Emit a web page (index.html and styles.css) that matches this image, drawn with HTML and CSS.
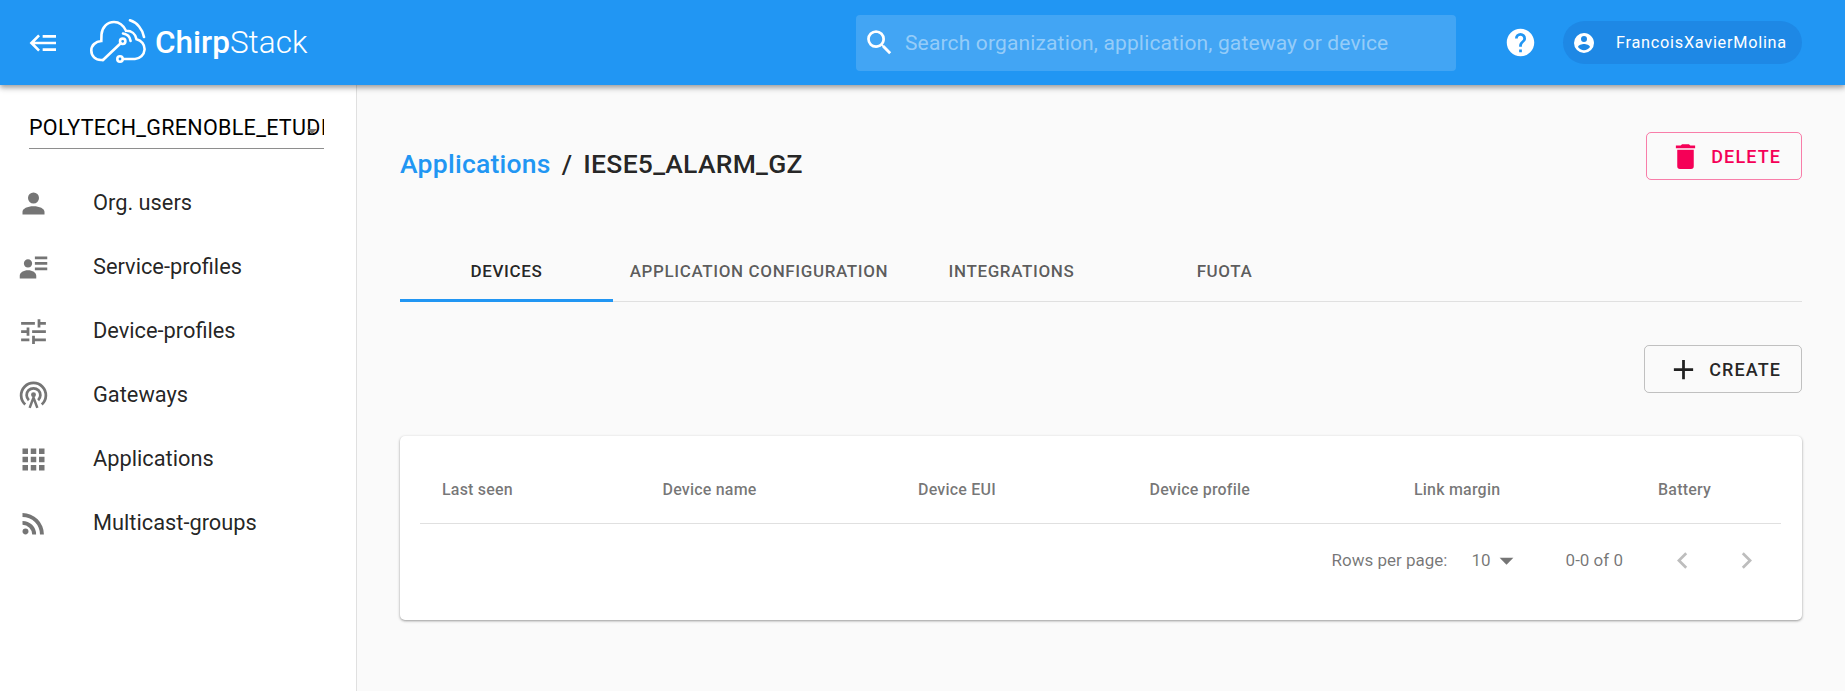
FILE: index.html
```html
<!DOCTYPE html>
<html lang="en">
<head>
<meta charset="utf-8">
<title>ChirpStack</title>
<link rel="stylesheet" href="styles.css">
</head>
<body>
<div class="app">
  <header class="topbar">
    <svg class="icon menu-icon" viewBox="0 0 24 24"><path d="M5,13L9,17L7.6,18.42L1.18,12L7.6,5.58L9,7L5,11H21V13H5M21,6V8H11V6H21M21,16V18H11V16H21Z"/></svg>
    <div class="logo">
      <svg class="logo-mark" viewBox="0 0 56 44" fill="none" stroke="#fff" stroke-width="2.6" stroke-linecap="round">
        <path d="M33 40H45A10 10 0 0 0 46.5 20.2C45.5 15 41.5 11.6 36 11.8C33.5 6.5 29.5 3 24 3C17 3 12 8.5 11.5 15.5L11.3 22C5.5 22.5 1.3 26.5 1.3 31.5C1.3 37 5.5 41 11 41H13"/>
        <path d="M13 41L30.7 24.3"/>
        <circle cx="32.7" cy="22.3" r="2.7"/>
        <circle cx="30" cy="40" r="2.7"/>
        <path d="M33 14.5C37 15 40 18 40.6 22"/>
        <path d="M40 1.3C47 3.5 52.5 10 54 18"/>
      </svg>
      <span class="logo-text"><b class="logo-strong">Chirp</b>Stack</span>
    </div>
    <div class="search">
      <svg class="icon search-icon" viewBox="0 0 24 24"><path d="M9.5,3A6.5,6.5 0 0,1 16,9.5C16,11.11 15.41,12.59 14.44,13.73L14.71,14H15.5L20.5,19L19,20.5L14,15.5V14.71L13.73,14.44C12.59,15.41 11.11,16 9.5,16A6.5,6.5 0 0,1 3,9.5A6.5,6.5 0 0,1 9.5,3M9.5,5C7,5 5,7 5,9.5C5,12 7,14 9.5,14C12,14 14,12 14,9.5C14,7 12,5 9.5,5Z"/></svg>
      <span class="search-text">Search organization, application, gateway or device</span>
    </div>
    <svg class="icon help-icon" viewBox="0 0 24 24"><path d="M15.07,11.25L14.17,12.17C13.45,12.89 13,13.5 13,15H11V14.5C11,13.39 11.45,12.39 12.17,11.67L13.41,10.41C13.78,10.05 14,9.55 14,9C14,7.89 13.1,7 12,7A2,2 0 0,0 10,9H8A4,4 0 0,1 12,5A4,4 0 0,1 16,9C16,9.88 15.64,10.67 15.07,11.25M13,19H11V17H13M12,2A10,10 0 0,0 2,12A10,10 0 0,0 12,22A10,10 0 0,0 22,12C22,6.47 17.5,2 12,2Z"/></svg>
    <div class="user-chip">
      <svg class="icon chip-icon" viewBox="0 0 24 24"><path d="M12,19.2C9.5,19.2 7.29,17.92 6,16C6.03,14 10,12.9 12,12.9C14,12.9 17.97,14 18,16C16.71,17.92 14.5,19.2 12,19.2M12,5A3,3 0 0,1 15,8A3,3 0 0,1 12,11A3,3 0 0,1 9,8A3,3 0 0,1 12,5M12,2A10,10 0 0,0 2,12A10,10 0 0,0 12,22A10,10 0 0,0 22,12C22,6.47 17.5,2 12,2Z"/></svg>
      <span class="chip-text">FrancoisXavierMolina</span>
    </div>
  </header>

  <div class="body-row">
    <aside class="sidebar">
      <div class="org-select">
        <span class="org-name">POLYTECH_GRENOBLE_ETUDIANTS</span>
        <svg class="icon org-arrow" viewBox="0 0 24 24"><path d="M7,10L12,15L17,10H7Z"/></svg>
      </div>
      <nav class="nav">
        <div class="nav-item"><svg class="icon nav-icon" viewBox="0 0 24 24"><path d="M12,4A4,4 0 0,1 16,8A4,4 0 0,1 12,12A4,4 0 0,1 8,8A4,4 0 0,1 12,4M12,14C16.42,14 20,15.79 20,18V20H4V18C4,15.79 7.58,14 12,14Z"/></svg><span class="nav-label">Org. users</span></div>
        <div class="nav-item"><svg class="icon nav-icon" viewBox="0 0 24 24"><path d="M11,9C11,10.66 9.66,12 8,12C6.34,12 5,10.66 5,9C5,7.34 6.34,6 8,6C9.66,6 11,7.34 11,9M14,20H2V18C2,15.79 4.69,14 8,14C11.31,14 14,15.79 14,18M22,12V14H13V12M22,8V10H13V8M22,4V6H13V4Z"/></svg><span class="nav-label">Service-profiles</span></div>
        <div class="nav-item"><svg class="icon nav-icon" viewBox="0 0 24 24"><path d="M3,17V19H9V17H3M3,5V7H13V5H3M13,21V19H21V17H13V15H11V21H13M7,9V11H3V13H7V15H9V9H7M21,13V11H11V13H21M15,9H17V7H21V5H17V3H15V9Z"/></svg><span class="nav-label">Device-profiles</span></div>
        <div class="nav-item"><svg class="icon nav-icon" viewBox="0 0 24 24"><path d="M6 18.6A9 9 0 1 1 18 18.6" fill="none" stroke="#757575" stroke-width="2"/><path d="M8.6 15.4A5 5 0 1 1 15.4 15.4" fill="none" stroke="#757575" stroke-width="2"/><circle cx="12" cy="11.5" r="1.8"/><path d="M9.2 21L12 13.5L14.8 21" fill="none" stroke="#757575" stroke-width="1.8"/></svg><span class="nav-label">Gateways</span></div>
        <div class="nav-item"><svg class="icon nav-icon" viewBox="0 0 24 24"><path d="M16,20H20V16H16M16,14H20V10H16M10,8H14V4H10M16,8H20V4H16M10,14H14V10H10M4,14H8V10H4M4,20H8V16H4M10,20H14V16H10M4,8H8V4H4V8Z"/></svg><span class="nav-label">Applications</span></div>
        <div class="nav-item"><svg class="icon nav-icon" viewBox="0 0 24 24"><path d="M6.18,15.64A2.18,2.18 0 0,1 8.36,17.82C8.36,19 7.38,20 6.18,20C5,20 4,19 4,17.82A2.18,2.18 0 0,1 6.18,15.64M4,4.44A15.56,15.56 0 0,1 19.56,20H16.73A12.73,12.73 0 0,0 4,7.27V4.44M4,10.1A9.9,9.9 0 0,1 13.9,20H11.07A7.07,7.07 0 0,0 4,12.93V10.1Z"/></svg><span class="nav-label">Multicast-groups</span></div>
      </nav>
    </aside>

    <main class="main">
      <div class="title-row">
        <div class="crumbs"><a class="crumb-link">Applications</a><span class="crumb-sep">/</span><span class="crumb-current">IESE5_ALARM_GZ</span></div>
        <button class="btn btn-danger"><svg class="icon btn-icon" viewBox="0 0 24 24"><path d="M19,4H15.5L14.5,3H9.5L8.5,4H5V6H19M6,19A2,2 0 0,0 8,21H16A2,2 0 0,0 18,19V7H6V19Z"/></svg>DELETE</button>
      </div>

      <div class="tabs">
        <div class="tab tab-active">DEVICES</div>
        <div class="tab tab-wide">APPLICATION CONFIGURATION</div>
        <div class="tab">INTEGRATIONS</div>
        <div class="tab">FUOTA</div>
      </div>

      <div class="action-row">
        <button class="btn btn-default"><svg class="icon btn-icon" viewBox="0 0 24 24"><path d="M19,13H13V19H11V13H5V11H11V5H13V11H19V13Z"/></svg>CREATE</button>
      </div>

      <section class="card">
        <div class="table-head">
          <span>Last seen</span><span>Device name</span><span>Device EUI</span><span>Device profile</span><span>Link margin</span><span>Battery</span>
        </div>
        <div class="pager">
          <span class="pager-label">Rows per page:</span>
          <span class="pager-size">10</span>
          <svg class="icon pager-arrow" viewBox="0 0 24 24"><path d="M7,10L12,15L17,10H7Z"/></svg>
          <span class="pager-count">0-0 of 0</span>
          <svg class="icon pager-nav pager-prev" viewBox="0 0 24 24"><path d="M15.41,16.58L10.83,12L15.41,7.41L14,6L8,12L14,18L15.41,16.58Z"/></svg>
          <svg class="icon pager-nav pager-next" viewBox="0 0 24 24"><path d="M8.59,16.58L13.17,12L8.59,7.41L10,6L16,12L10,18L8.59,16.58Z"/></svg>
        </div>
      </section>
    </main>
  </div>
</div>
</body>
</html>
```

FILE: styles.css
```css
* { box-sizing: border-box; }
html, body { margin: 0; padding: 0; height: 100%; }
body {
  font-family: Roboto, "Liberation Sans", sans-serif;
  background: #fafafa;
  color: rgba(0, 0, 0, 0.87);
  overflow: hidden;
}
.app { display: flex; flex-direction: column; height: 691px; }
.icon { display: block; fill: currentColor; flex: none; }

/* top bar */
.topbar {
  position: relative;
  z-index: 2;
  flex: none;
  height: 85px;
  display: flex;
  align-items: center;
  background: #2196f3;
  color: #fff;
  box-shadow: 0 2px 5px rgba(0, 0, 0, 0.3), 0 4px 6px rgba(0, 0, 0, 0.12);
}
.menu-icon { width: 32px; height: 32px; margin-left: 28px; }
.logo { display: flex; align-items: center; margin-left: 30px; width: 766px; }
.logo-mark { width: 56px; height: 44px; flex: none; margin-bottom: 4px; }
.logo-text {
  margin-left: 9px;
  font-size: 31.5px;
  font-weight: 300;
  letter-spacing: 0;
}
.logo-strong { font-weight: 500; }
.search {
  width: 600px;
  height: 56px;
  display: flex;
  align-items: center;
  border-radius: 4px;
  background: rgba(255, 255, 255, 0.15);
}
.search-icon { width: 33px; height: 33px; margin-left: 7px; }
.search-text {
  margin-left: 9px;
  font-size: 21px;
  letter-spacing: 0.15px;
  color: rgba(255, 255, 255, 0.45);
}
.help-icon { width: 33px; height: 33px; margin-left: 48px; }
.user-chip {
  margin-left: 26px;
  width: 239px;
  height: 43px;
  display: flex;
  align-items: center;
  border-radius: 22px;
  background: #1e88e5;
}
.chip-icon { width: 24px; height: 24px; margin-left: 9px; }
.chip-text { margin-left: 20px; font-size: 16.25px; letter-spacing: 0.75px; }

/* sidebar */
.body-row { flex: 1; display: flex; min-height: 0; }
.sidebar {
  flex: none;
  width: 357px;
  background: #fff;
  border-right: 1px solid #e0e0e0;
}
.org-select {
  position: relative;
  margin: 30px 32px 0 29px;
  height: 34px;
  overflow: hidden;
  border-bottom: 1px solid #8e8e8e;
}
.org-name {
  display: block;
  font-size: 21.5px;
  letter-spacing: 0.3px;
  line-height: 26px;
  white-space: nowrap;
  color: #000;
}
.org-arrow {
  position: absolute;
  top: 4px;
  right: 0;
  width: 24px;
  height: 24px;
  color: #757575;
}
.nav { margin-top: 22px; }
.nav-item {
  height: 64px;
  display: flex;
  align-items: center;
  font-size: 21.8px;
  padding-left: 17px;
  color: rgba(0, 0, 0, 0.87);
}
.nav-label { padding-bottom: 2px; }
.nav-icon { width: 33px; height: 33px; margin-right: 43px; color: #757575; }

/* main */
.main { flex: 1; min-width: 0; padding: 47px 43px 0; }
.title-row { display: flex; justify-content: space-between; align-items: center; height: 48px; }
.crumbs { display: flex; font-size: 26.5px; font-weight: 500; letter-spacing: 0.25px; margin-top: 14px; }
.crumb-link { color: #2196f3; }
.crumb-sep { margin: 0 11px; }
.btn {
  display: flex;
  align-items: center;
  height: 48px;
  padding: 0 20px 0 22px;
  background: transparent;
  border-radius: 5px;
  font-family: inherit;
  font-size: 18px;
  font-weight: 500;
  letter-spacing: 1.1px;
}
.btn-icon { width: 33px; height: 33px; margin-right: 9px; }
.btn-danger { border: 1px solid rgba(245, 0, 87, 0.5); color: #f50057; }
.btn-default { border: 1px solid rgba(0, 0, 0, 0.23); color: rgba(0, 0, 0, 0.87); }

.tabs { display: flex; height: 72px; margin-top: 50px; border-bottom: 1px solid #e0e0e0; }
.tab {
  width: 213px;
  height: 72px;
  padding-top: 10px;
  display: flex;
  align-items: center;
  justify-content: center;
  font-size: 17px;
  font-weight: 500;
  letter-spacing: 0.62px;
  color: rgba(0, 0, 0, 0.65);
}
.tab-wide { width: 292px; }
.tab-active { color: rgba(0, 0, 0, 0.87); border-bottom: 3px solid #2196f3; padding-top: 13px; }

.action-row { display: flex; justify-content: flex-end; margin-top: 43px; }

.card {
  margin-top: 43px;
  height: 184px;
  padding: 0 21px 0 20px;
  background: #fff;
  border-radius: 5px;
  box-shadow: 0 1px 3px rgba(0, 0, 0, 0.3), 0 1px 2px rgba(0, 0, 0, 0.12);
}
.table-head {
  display: grid;
  grid-template-columns: 220.5px 255.5px 231.5px 264.5px 244px 145px;
  align-items: center;
  height: 88px;
  padding-top: 20px;
  border-bottom: 1px solid #e0e0e0;
  font-size: 16px;
  font-weight: 500;
  letter-spacing: 0.2px;
  color: rgba(0, 0, 0, 0.55);
}
.table-head span { padding-left: 22px; }
.pager {
  display: flex;
  align-items: center;
  justify-content: flex-end;
  height: 72px;
  font-size: 17px;
  color: rgba(0, 0, 0, 0.55);
}
.pager-size { margin-left: 24px; }
.pager-arrow { width: 33px; height: 33px; margin-left: -1px; color: #757575; }
.pager-count { margin-left: 43px; }
.pager-nav { width: 33px; height: 33px; color: rgba(0, 0, 0, 0.26); }
.pager-prev { margin-left: 43px; }
.pager-next { margin-left: 31px; margin-right: 18px; }
```
